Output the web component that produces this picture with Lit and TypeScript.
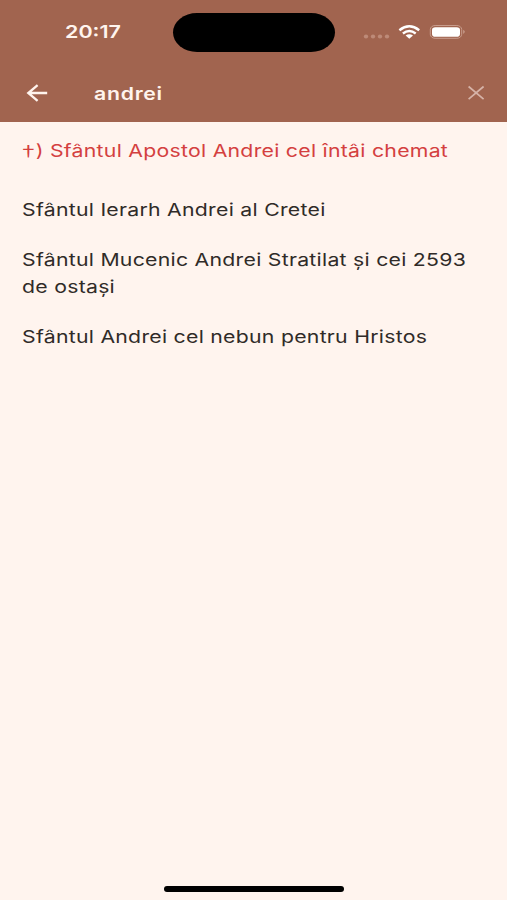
import { LitElement, html, css, nothing } from "lit";
import { customElement, property } from "lit/decorators.js";

// Text drawn wider than its natural proportions, with an optional feast mark in front.
@customElement("wide-text")
class WideText extends LitElement {
  static styles = css`
    :host { display: block; }
    .t {
      display: block;
      width: max-content;
      white-space: pre;
      transform: scaleX(1.221);
      transform-origin: 0 50%;
    }
    .mark {
      display: inline-block;
      width: 11.2px;
      font-size: 23px;
      font-weight: 300;
      letter-spacing: 0;
      line-height: 0;
      vertical-align: -5px;
      text-indent: -0.5px;
    }
  `;
  @property() text = "";
  @property() mark = "";
  render() {
    return html`<span class="t">${this.mark ? html`<span class="mark">${this.mark}</span>` : nothing}${this.text}</span>`;
  }
}

interface Saint {
  lines: string[];
  feast?: boolean;
}

@customElement("app-root")
class AppRoot extends LitElement {
  static styles = css`
    :host {
      display: flex;
      flex-direction: column;
      box-sizing: border-box;
      width: 507px;
      height: 900px;
      overflow: hidden;
      background: #fff4ee;
      color: #302b28;
      font-family: Inter, "Liberation Sans", sans-serif;
    }
    .top { background: #a1644f; color: #fff4ee; height: 122px; flex: none; }
    .status { display: flex; align-items: center; height: 64px; }
    .time { width: 108px; padding-left: 65px; font-size: 17.6px; font-weight: 600; line-height: 22px; }
    .island { width: 162px; height: 39px; border-radius: 24px / 19.5px; background: #000; flex: none; }
    .signs { margin-left: 26px; display: block; }
    .bar { display: flex; align-items: center; height: 58px; }
    .back { margin-left: 25px; }
    .query { margin-left: 45px; padding-top: 2px; flex: 1; font-size: 17.4px; font-weight: 600; letter-spacing: 0.6px; line-height: 24px; }
    .clear { margin-right: 21px; }
    svg { display: block; flex: none; }
    .list { flex: 1; padding: 15px 0 0 22px; font-size: 17.4px; letter-spacing: 0.22px; line-height: 27.5px; }
    .item { margin-bottom: 22px; }
    .feast { color: #d4403f; margin-bottom: 31.5px; }
    .home { width: 180px; height: 6px; border-radius: 3px; background: #000; margin: 0 auto 8px 164px; flex: none; }
  `;

  private saints: Saint[] = [
    { lines: [") Sfântul Apostol Andrei cel întâi chemat"], feast: true },
    { lines: ["Sfântul Ierarh Andrei al Cretei"] },
    { lines: ["Sfântul Mucenic Andrei Stratilat și cei 2593", "de ostași"] },
    { lines: ["Sfântul Andrei cel nebun pentru Hristos"] },
  ];

  render() {
    return html`
      <div class="top">
        <div class="status">
          <wide-text class="time" text="20:17"></wide-text>
          <div class="island"></div>
          <svg class="signs" width="106" height="20" viewBox="361 22 106 20">
            <g fill="#bd8a78">
              <ellipse cx="366" cy="36.5" rx="2.2" ry="1.9" />
              <ellipse cx="373" cy="36.5" rx="2.2" ry="1.9" />
              <ellipse cx="380" cy="36.5" rx="2.2" ry="1.9" />
              <ellipse cx="387" cy="36.5" rx="2.2" ry="1.9" />
            </g>
            <g fill="none" stroke="#fff" stroke-width="2.4">
              <path d="M399.4 30.2Q409.3 22.4 419.2 30.2" />
              <path d="M402.9 33.5Q409.3 28.4 415.7 33.5" />
            </g>
            <path fill="#fff" d="M405.6 35.6Q409.3 33 413 35.6L409.3 38.7Z" />
            <rect x="430.3" y="25.5" width="31.4" height="12.8" rx="4.8" ry="4" fill="none" stroke="#c89c8c" />
            <rect x="432" y="27.2" width="28" height="9.5" rx="3.4" ry="2.8" fill="#fff" />
            <path d="M463.2 29.8Q466.4 31.8 463.2 33.9Z" fill="#c89c8c" />
          </svg>
        </div>
        <div class="bar">
          <svg class="back" width="24" height="20" viewBox="25 83 24 20">
            <path d="M47.2 93H28.6M37.6 85.2L28.3 93L37.6 100.8" fill="none" stroke="#fff4ee" stroke-width="2.3" />
          </svg>
          <wide-text class="query" text="andrei"></wide-text>
          <svg class="clear" width="20" height="18" viewBox="466 83.5 20 18">
            <path d="M468.6 86L483.6 98.6M483.6 86L468.6 98.6" fill="none" stroke="#d6b3a8" stroke-width="1.7" />
          </svg>
        </div>
      </div>
      <div class="list">
        ${this.saints.map(
          (s) => html`<div class=${s.feast ? "item feast" : "item"}>
            ${s.lines.map((l) => html`<wide-text mark=${s.feast ? "†" : ""} text=${l}></wide-text>`)}
          </div>`,
        )}
      </div>
      <div class="home"></div>
    `;
  }
}
